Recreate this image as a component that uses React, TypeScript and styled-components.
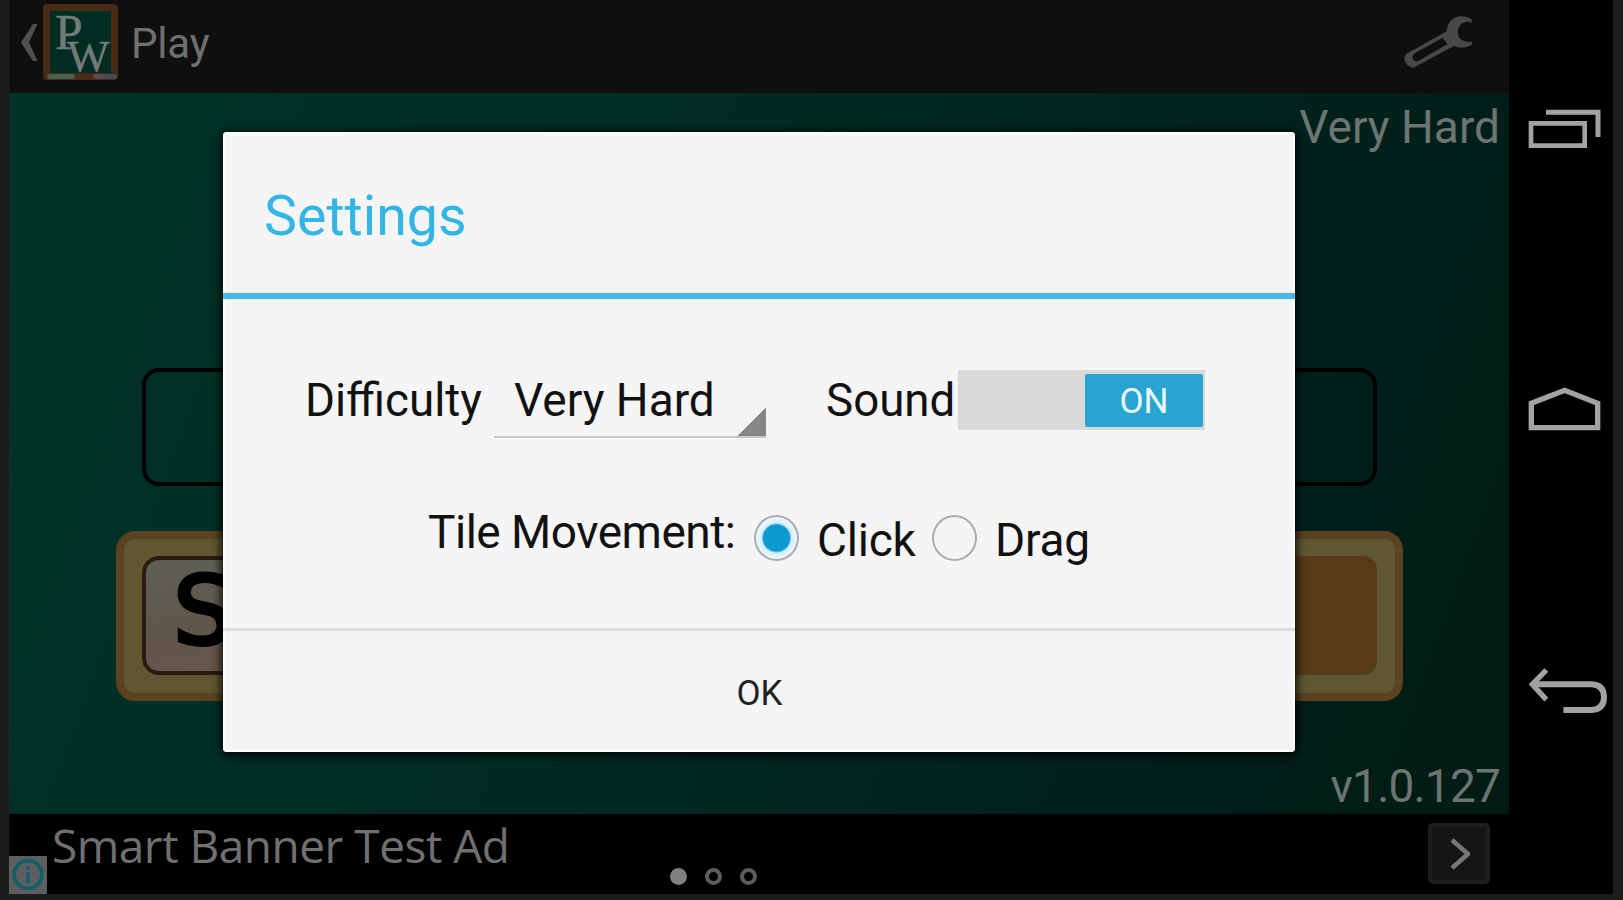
import React from "react";
import styled, { createGlobalStyle } from "styled-components";

const App = () => (
  <>
    <GlobalStyle />
    <Device>
      <Screen>
        <ActionBar>
          <BackChevron viewBox="0 0 20 40">
            <path d="M13 2 L17.5 2 L9 20.5 L17.5 39 L13 39 L1 20.5 Z" />
          </BackChevron>
          <Logo>
            <LogoLetter $left={12} $top={1} $size={50}>
              P
            </LogoLetter>
            <LogoLetter $left={24} $top={25} $size={45}>
              W
            </LogoLetter>
            <Chalk $left={4} $width={28} $color="#48604f" />
            <Chalk $left={50} $width={12} $color="#62494b" />
            <Chalk $left={60} $width={14} $color="#414b5e" />
          </Logo>
          <ScreenTitle>Play</ScreenTitle>
          <Wrench viewBox="330 36 228 180">
            <path
              fillRule="evenodd"
              d="M545 58 Q520 44 496 52 Q472 64 470 94 L352 160 Q340 168 344 180 Q349 198 365 202 Q372 204 380 198 L492 138 Q520 150 545 134 L547 124 Q522 130 507 112 Q497 88 515 70 Q530 62 545 68 Z M458 113 L374 160 Q364 168 369 178 Q374 187 386 182 L472 133 Z"
            />
          </Wrench>
        </ActionBar>

        <Board>
          <Level>Very Hard</Level>
          <AnswerSlots />
          <Rack>
            <Tile>
              <TileLetter>S</TileLetter>
            </Tile>
            <RackSlot />
          </Rack>
          <Version>v1.0.127</Version>
        </Board>

        <AdBanner>
          <AdInfo viewBox="0 0 37 37">
            <circle cx="18.500" cy="18" r="13.500" />
            <path d="M18.500 15.500 V26.500 M18.500 10 V13.200" />
          </AdInfo>
          <AdText>Smart Banner Test Ad</AdText>
          <Dots>
            <Dot $active />
            <Dot />
            <Dot />
          </Dots>
          <AdNext>
            <svg width="22" height="34" viewBox="0 0 22 34">
              <path d="M4 3 L20 17 L4 31" />
            </svg>
          </AdNext>
        </AdBanner>
      </Screen>

      <NavBar>
        <NavIcon $height={45} viewBox="711 318 246 135">
          <path strokeWidth="15" d="M768 337 H924 V411" />
          <path strokeWidth="14" d="M723 370 H884 V437 H723 Z" />
        </NavIcon>
        <NavIcon $height={48} viewBox="141 72 246 144">
          <path strokeWidth="16" d="M154 127 L254 88 L353 127 V200 H154 Z" />
        </NavIcon>
        <NavIcon $height={50} viewBox="141 918 246 150">
          <path
            strokeWidth="18"
            d="M158 973 H335 Q372 975 372 1011 Q372 1048 335 1050 H250"
          />
          <path strokeWidth="16" d="M199 930 L157 973 L199 1019" />
        </NavIcon>
      </NavBar>

      <Dialog>
        <DialogTitle>Settings</DialogTitle>
        <DialogBody>
          <OptionsRow>
            <Label $width={189}>Difficulty</Label>
            <Spinner>Very Hard</Spinner>
            <Label $width={132}>Sound</Label>
            <Switch>
              <SwitchThumb>ON</SwitchThumb>
            </Switch>
          </OptionsRow>
          <MovementRow>
            <MovementLabel>Tile Movement:</MovementLabel>
            <Radio $checked />
            <RadioLabel $width={99}>Click</RadioLabel>
            <Radio />
            <RadioLabel $width={100}>Drag</RadioLabel>
          </MovementRow>
        </DialogBody>
        <OkButton>OK</OkButton>
      </Dialog>
    </Device>
  </>
);

export default App;

const GlobalStyle = createGlobalStyle`
  * {
    box-sizing: border-box;
  }

  body {
    margin: 0;
    overflow: hidden;
    background: #1d1d1d;
    font-family: Roboto, "Liberation Sans", sans-serif;
  }
`;

const Device = styled.div`
  position: relative;
  display: flex;
  width: 1623px;
  height: 900px;
  padding: 0 10px 6px 9px;
  background: #1d1d1d;
`;

const Screen = styled.div`
  display: flex;
  flex-direction: column;
  width: 1500px;
`;

const ActionBar = styled.header`
  display: flex;
  align-items: flex-start;
  height: 93px;
  background: #0f0f0f;
`;

const BackChevron = styled.svg`
  width: 20px;
  height: 40px;
  margin: 22px 3px 0 11px;
  fill: #505050;
`;

const Logo = styled.div`
  position: relative;
  width: 75px;
  height: 76px;
  margin-top: 4px;
  border: 7px solid #482a17;
  border-radius: 4px;
  background: #002c21;
`;

interface LogoLetterProps {
  $left: number;
  $top: number;
  $size: number;
}

const LogoLetter = styled.span<LogoLetterProps>`
  position: absolute;
  left: ${(props) => props.$left - 7}px;
  top: ${(props) => props.$top}px;
  color: #727b78;
  font-family: "Liberation Serif", serif;
  font-size: ${(props) => props.$size}px;
  line-height: 40px;
  -webkit-text-stroke: 0.4px #727b78;
`;

interface ChalkProps {
  $left: number;
  $width: number;
  $color: string;
}

const Chalk = styled.span<ChalkProps>`
  position: absolute;
  left: ${(props) => props.$left - 7}px;
  bottom: -6px;
  width: ${(props) => props.$width}px;
  height: 5px;
  border-radius: 3px;
  background: ${(props) => props.$color};
`;

const ScreenTitle = styled.h1`
  flex: 1;
  margin: 19px 0 0 13px;
  color: #6f6f6f;
  font-size: 42px;
  font-weight: 400;
  letter-spacing: -0.2px;
  line-height: 50px;
`;

const Wrench = styled.svg`
  width: 76px;
  height: 60px;
  margin: 12px 33px 0 0;
  fill: #484848;
`;

const Board = styled.main`
  display: flex;
  flex-direction: column;
  align-items: center;
  height: 721px;
  background: linear-gradient(110deg, #003327 0%, #002b21 45%, #00201a 78%, #001b12 100%);
`;

const Level = styled.div`
  align-self: flex-end;
  height: 54px;
  margin: 7px 9px 0 0;
  color: #6c7572;
  font-size: 46px;
  line-height: 54px;
`;

const AnswerSlots = styled.div`
  width: 1235px;
  height: 118px;
  margin-top: 214px;
  border: 4px solid #000;
  border-radius: 17px;
`;

const Rack = styled.div`
  display: flex;
  justify-content: space-between;
  width: 1287px;
  height: 170px;
  margin-top: 45px;
  padding: 17px 18px;
  border: 8px solid #5b4322;
  border-radius: 19px;
  background: #5e5732;
`;

const Tile = styled.div`
  width: 116px;
  height: 119px;
  border: 4px solid #291c13;
  border-radius: 17px;
  background: linear-gradient(170deg, #5e5f58, #605649 60%, #64584b);
  color: #000;
  font-family: "DejaVu Sans", sans-serif;
  font-size: 95px;
  line-height: 103px;
  text-align: center;
  -webkit-text-stroke: 4px #000;
`;

const TileLetter = styled.span`
  display: block;
  padding-left: 8px;
`;

const RackSlot = styled.div`
  width: 116px;
  height: 119px;
  border-radius: 14px;
  background: #583a19;
`;

const Version = styled.div`
  align-self: flex-end;
  margin: 58px 9px 0 0;
  color: #6c7572;
  font-size: 46px;
  letter-spacing: -0.8px;
  line-height: 54px;
`;

const AdBanner = styled.footer`
  display: flex;
  height: 80px;
  background: #000;
`;

const AdInfo = styled.svg`
  align-self: flex-end;
  width: 38px;
  height: 38px;
  background: #5c5f60;
  fill: none;
  stroke: #125e69;
  stroke-width: 3.5;
`;

const AdText = styled.div`
  width: 618px;
  margin: 0 0 0 5px;
  color: #707070;
  font-family: "Open Sans", "Noto Sans", sans-serif;
  font-size: 46px;
  letter-spacing: -0.5px;
  line-height: 62px;
  white-space: nowrap;
`;

const Dots = styled.div`
  display: flex;
  flex: 1;
  gap: 18px;
  margin-top: 54px;
`;

const Dot = styled.span<{ $active?: boolean }>`
  width: 17px;
  height: 17px;
  border: 4px solid ${(props) => (props.$active ? "#808080" : "#5c5c5c")};
  border-radius: 50%;
  background: ${(props) => (props.$active ? "#808080" : "none")};
`;

const AdNext = styled.button`
  display: grid;
  place-items: center;
  width: 62px;
  height: 61px;
  margin: 9px 19px 0 0;
  padding: 0;
  border: 4px solid #1e1e1e;
  border-radius: 5px;
  background: #151515;

  svg {
    fill: none;
    stroke: #777;
    stroke-width: 4.5;
  }
`;

const NavBar = styled.nav`
  display: flex;
  flex-direction: column;
  justify-content: space-between;
  width: 104px;
  padding: 106px 0 178px 18px;
  background: #000;
`;

const NavIcon = styled.svg<{ $height: number }>`
  width: 82px;
  height: ${(props) => props.$height}px;
  fill: none;
  stroke: #a2a2a2;
`;

const Dialog = styled.section`
  position: absolute;
  left: 223px;
  top: 132px;
  display: flex;
  flex-direction: column;
  width: 1072px;
  height: 620px;
  border-radius: 4px;
  background: #f5f5f5;
  box-shadow: inset 0 0 2px 2px #fff, 0 2px 10px 2px rgba(0, 0, 0, 0.85);
  color: #111;
`;

const DialogTitle = styled.h2`
  height: 167px;
  margin: 0;
  padding: 10px 41px 0;
  border-bottom: 6px solid #4ab8e4;
  color: #33b5e5;
  font-size: 55.5px;
  font-weight: 400;
  line-height: 150px;
`;

const DialogBody = styled.div`
  height: 332px;
  padding-top: 63px;
  border-bottom: 3px solid #dedede;
`;

const OptionsRow = styled.div`
  display: flex;
  height: 76px;
  padding-left: 82px;
  font-size: 46px;
  line-height: 77px;
`;

const Label = styled.span<{ $width: number }>`
  width: ${(props) => props.$width}px;
  font-size: 45.7px;
`;

const Spinner = styled.div`
  width: 272px;
  height: 76px;
  margin-right: 60px;
  padding-left: 20px;
  border-bottom: 2px solid #c8c8c8;
  background: linear-gradient(135deg, transparent 50%, #868686 50%) right bottom /
    30px 30px no-repeat border-box;
`;

const Switch = styled.div`
  display: flex;
  justify-content: flex-end;
  width: 247px;
  height: 60px;
  margin-top: 8px;
  padding: 4px 2px 3px;
  background: #d9d9d9;
`;

const SwitchThumb = styled.span`
  width: 118px;
  border-radius: 2px;
  background: #2aa5d0;
  color: #eaf7fc;
  font-size: 35px;
  line-height: 56px;
  text-align: center;
`;

const MovementRow = styled.div`
  display: flex;
  height: 77px;
  margin-top: 62px;
  padding-left: 205px;
  font-size: 46px;
`;

const MovementLabel = styled.span`
  width: 326px;
  letter-spacing: -0.5px;
  line-height: 64px;
`;

const Radio = styled.span<{ $checked?: boolean }>`
  width: 45px;
  height: 46px;
  margin-top: 15px;
  border: 2px solid #a9adaf;
  border-radius: 50%;
  background: ${(props) =>
    props.$checked
      ? "radial-gradient(circle, #0b99cf 13px, #d3eefa 15px, #eef7fb 20px)"
      : "none"};
`;

const RadioLabel = styled.span<{ $width: number }>`
  width: ${(props) => props.$width}px;
  margin: 0 16px 0 18px;
  letter-spacing: -0.2px;
  line-height: 81px;
`;

const OkButton = styled.button`
  flex: 1;
  padding: 4px 0 0 1px;
  border: 0;
  background: none;
  color: #222;
  font: 400 35px Roboto, sans-serif;
`;
